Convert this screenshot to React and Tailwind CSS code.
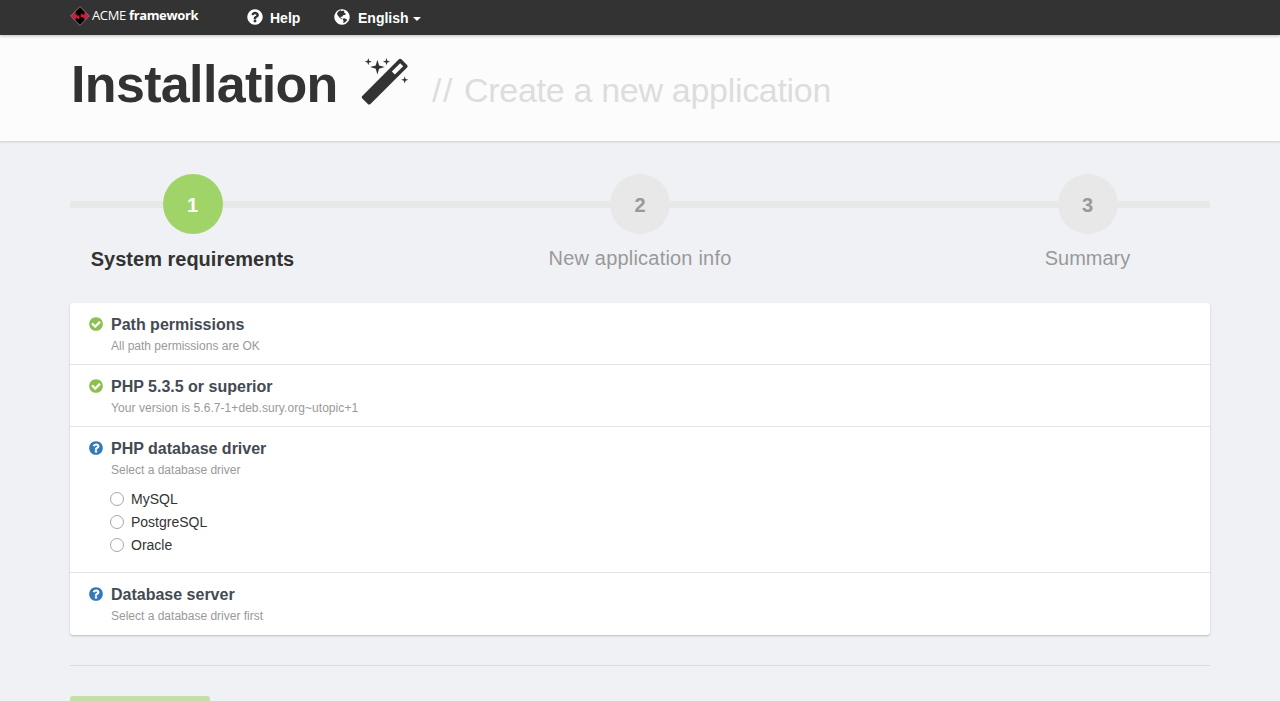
const RING =
  'M1664 896q0 209-103 385.5t-279.5 279.5-385.5 103-385.5-103-279.5-279.5-103-385.5 103-385.5 279.5-279.5 385.5-103 385.5 103 279.5 279.5 103 385.5z'

function Icon({ d, className }) {
  return (
    <svg viewBox="0 0 1792 1792" fill="currentColor" fillRule="evenodd" className={className} aria-hidden="true">
      <path d={d} />
    </svg>
  )
}

const QUESTION =
  RING +
  'M1024 1376v-192q0-14-9-23t-23-9h-192q-14 0-23 9t-9 23v192q0 14 9 23t23 9h192q14 0 23-9t9-23zm256-672q0-88-55.5-163t-138.5-116-170-41q-243 0-371 213-15 24 8 42l132 100q7 6 19 6 16 0 25-12 53-68 86-92 34-24 86-24 48 0 85.5 26t37.5 59q0 38-20 61t-68 45q-63 28-115.5 86.5t-52.5 125.5v36q0 14 9 23t23 9h192q14 0 23-9t9-23q0-19 21.5-49.5t54.5-49.5q32-18 49-28.5t46-35 44.5-48 28-60.5 12.5-81z'
const CHECK =
  RING +
  'M1412 734q0-28-18-46l-91-90q-19-19-45-19t-45 19l-408 407-226-226q-19-19-45-19t-45 19l-91 90q-18 18-18 46 0 27 18 45l362 362q19 19 45 19 27 0 46-19l543-543q18-18 18-45z'
const MAGIC =
  'M1190 581l293-293-107-107-293 293zm447-293q0 27-18 45l-1286 1286q-18 18-45 18t-45-18l-198-198q-18-18-18-45t18-45l1286-1286q18-18 45-18t45 18l198 198q18 18 18 45zm-1351-190l98 30-98 30-30 98-30-98-98-30 98-30 30-98zm350 162l196 60-196 60-60 196-60-196-196-60 196-60 60-196zm930 478l98 30-98 30-30 98-30-98-98-30 98-30 30-98zm-640-640l98 30-98 30-30 98-30-98-98-30 98-30 30-98z'
const GLOBE =
  RING +
  'M640 270L790 230L850 320L1010 260L1130 330L1090 440L1190 500L1280 620L1170 690L1050 700L960 800L900 900L790 850L740 920L850 1010L930 1080L900 1140L760 1050L640 940L540 830L450 700L400 560L480 400ZM1000 1050L1150 1010L1330 1110L1420 1180L1340 1300L1200 1420L1080 1500L1010 1470L1060 1290L980 1170Z'

function Logo() {
  return (
    <svg viewBox="0 0 20 20" className="size-5" aria-hidden="true">
      <path d="M10 .6 19.4 10 10 19.4.6 10Z" fill="#c8203c" />
      <path d="M10 .9 14.6 5.5V8.6H12.2V7.8H10.8V11H13.2V12.2H14.4V14.8L10 19.1 5.6 14.7V12.2H8V13H9.4V9.6H7V8.4H5.6V5.4Z" fill="#000" />
      <path d="M10 .6 19.4 10 10 19.4.6 10Z" fill="none" stroke="#8b8b8b" strokeWidth="0.7" />
    </svg>
  )
}

function Step({ number, label, active, className, labelClass = '' }) {
  return (
    <li className={`flex flex-col items-center ${className}`}>
      <span className={`flex size-[60px] items-center justify-center rounded-full pt-[2px] text-[20px] font-bold ${active ? 'bg-[#a0d468] text-white' : 'bg-[#e8e8e8] text-[#999]'}`}>
        {number}
      </span>
      <span className={`whitespace-nowrap text-[20px] leading-[30px] ${active ? 'mt-[10px] font-bold text-[#333]' : 'mt-[9px] text-[#999]'} ${labelClass}`}>{label}</span>
    </li>
  )
}

function Requirement({ ok, title, note, noteClass = '', children }) {
  return (
    <li className="flex border-b border-[#e2e4e8] pb-2 pl-[18px] pt-[11px] last:border-b-0 last:pb-[9px]">
      <Icon d={ok ? CHECK : QUESTION} className={`mt-[2px] size-4 shrink-0 ${ok ? 'text-[#8cc152]' : 'text-[#337ab7]'}`} />
      <div className="ml-[7px]">
        <h3 className="text-[16px] font-bold leading-[22px] text-[#434a54]">{title}</h3>
        <p className={`mt-px pb-px text-[12px] leading-[18px] text-[#999] ${noteClass}`}>{note}</p>
        {children}
      </div>
    </li>
  )
}

export default function App() {
  return (
    <div className="h-[701px] overflow-hidden bg-[#f0f1f5] font-['Liberation_Sans',Arial,sans-serif] text-[#333]">
      <nav className="relative flex h-[35px] items-start bg-[#323332] px-[70px] text-[14px] font-bold text-white shadow-[0_1px_3px_rgba(0,0,0,0.25)]">
        <a className="mt-[6px] flex h-5 w-[177px] items-center">
          <Logo />
          <span className="ml-[2px] whitespace-nowrap font-['Open_Sans','Noto_Sans',sans-serif] text-[13px] font-normal tracking-[-0.35px]">
            ACME <b>framework</b>
          </span>
        </a>
        <a className="mt-[8px] flex w-[87px] items-start leading-5">
          <Icon d={QUESTION} className="-ml-px size-[18px]" />
          <span className="ml-[6px]">Help</span>
        </a>
        <a className="mt-[8px] flex items-start leading-5">
          <Icon d={GLOBE} className="-ml-px size-[18px]" />
          <span className="ml-[7px]">English</span>
          <span className="ml-[4px] mt-[9px] border-x-4 border-t-4 border-x-transparent border-t-white" />
        </a>
      </nav>
      <header className="flex h-[106px] items-start bg-[#fcfcfc] px-[70px] shadow-[0_1px_2px_rgba(0,0,0,0.15)]">
        <h1 className="mt-[19px] w-[291px] whitespace-nowrap pl-px text-[52px] font-bold leading-[60px] tracking-[-0.65px]">Installation</h1>
        <Icon d={MAGIC} className="mt-[23px] size-[51px]" />
        <span className="ml-[20px] mt-[35px] whitespace-nowrap text-[34px] leading-[40px] tracking-[-0.3px] text-[#ddd]">
          <span className="mr-px tracking-[1.5px]">//</span> Create a new application
        </span>
      </header>
      <main className="px-[70px] pt-[33px]">
        <div className="relative h-[129px]">
          <div className="absolute top-[27px] h-[7px] w-full bg-[#e8e8e8]" />
          <ol className="relative flex justify-between">
            <Step number="1" label="System requirements" active className="w-[245px]" />
            <Step number="2" label="New application info" className="w-[245px]" labelClass="tracking-[0.2px]" />
            <Step number="3" label="Summary" className="w-[245px]" />
          </ol>
        </div>
        <ul className="rounded-[3px] bg-white shadow-[0_1px_2px_rgba(0,0,0,0.22)]">
          <Requirement ok title="Path permissions" note="All path permissions are OK" />
          <Requirement ok title="PHP 5.3.5 or superior" note="Your version is 5.6.7-1+deb.sury.org~utopic+1" noteClass="tracking-[0.06px]" />
          <Requirement title="PHP database driver" note="Select a database driver">
            <div className="mb-2 mt-[7px] flex flex-col">
              {['MySQL', 'PostgreSQL', 'Oracle'].map((name) => (
                <label key={name} className="-ml-px flex h-[23px] items-center text-[14px] leading-5">
                  <input type="radio" name="driver" className="mr-[7px] size-[14px] appearance-none rounded-full border border-[#a6a6a6] bg-white" />
                  {name}
                </label>
              ))}
            </div>
          </Requirement>
          <Requirement title="Database server" note="Select a database driver first" />
        </ul>
        <hr className="mt-[30px] border-[#dcdde0]" />
        <button className="mt-[30px] block h-[40px] w-[140px] rounded-[3px] bg-[#c4dda9]" aria-label="Next" />
      </main>
    </div>
  )
}
